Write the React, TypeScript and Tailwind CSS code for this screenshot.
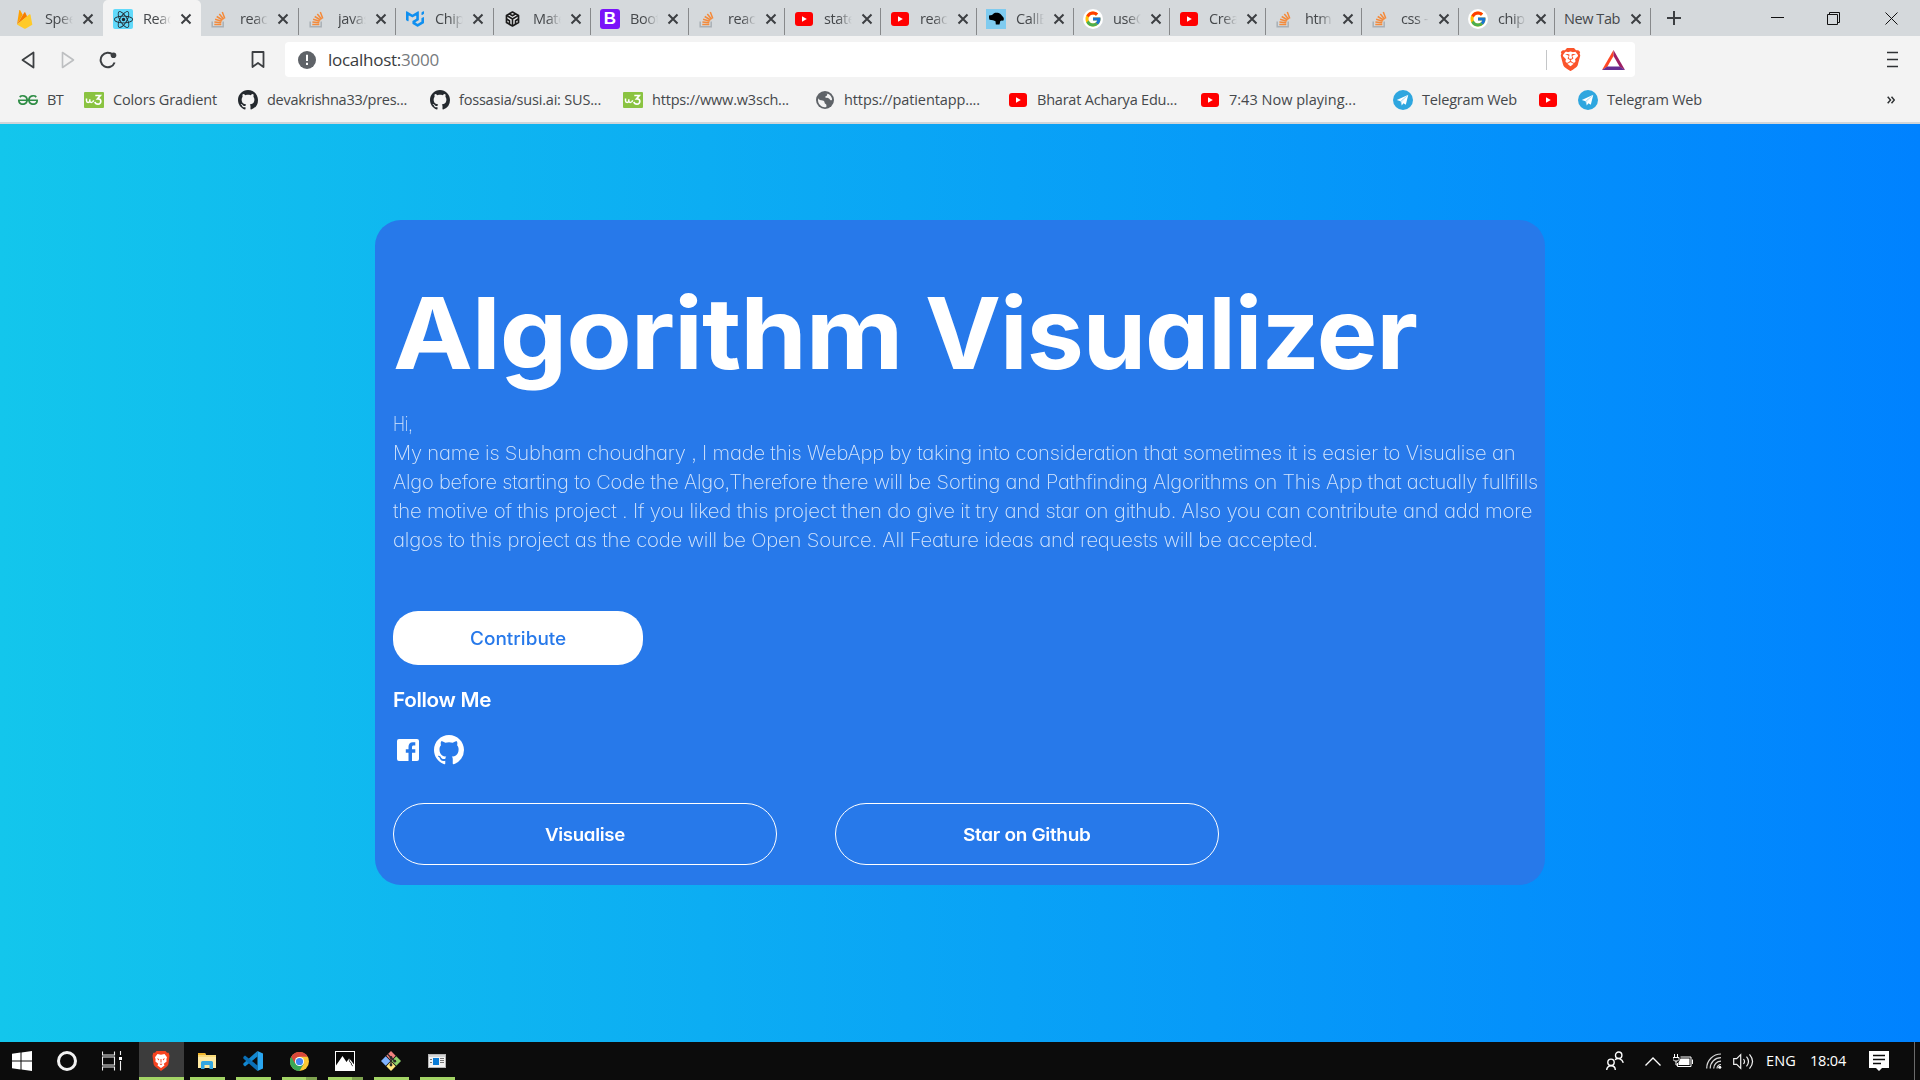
import React, { useLayoutEffect, useRef } from "react";
import type { ReactNode } from "react";
import { FaReact } from "react-icons/fa";
import { FcGoogle } from "react-icons/fc";
import { SiMui, SiBrave, SiGeeksforgeeks } from "react-icons/si";

/* Tracks a single line of text out (or in) until it spans the given width. */
function Line({ w, children, className = "" }: { w: number; children: string; className?: string }) {
  const ref = useRef<HTMLSpanElement>(null);
  useLayoutEffect(() => {
    const el = ref.current;
    if (!el) return;
    el.style.letterSpacing = "0px";
    const natural = el.getBoundingClientRect().width;
    el.style.letterSpacing = `${(w - natural) / children.length}px`;
  }, [w, children]);
  return (
    <span ref={ref} className={`inline-block whitespace-pre ${className}`}>
      {children}
    </span>
  );
}

/* Widens the letterforms themselves until the line spans the given width. */
function WideLine({ w, children, className = "" }: { w: number; children: string; className?: string }) {
  const ref = useRef<HTMLSpanElement>(null);
  useLayoutEffect(() => {
    const el = ref.current;
    if (!el) return;
    el.style.transform = `scaleX(${w / el.offsetWidth})`;
  }, [w, children]);
  return (
    <span style={{ width: w }} className={`block text-left whitespace-pre ${className}`}>
      <span ref={ref} className="inline-block origin-left">
        {children}
      </span>
    </span>
  );
}

/* ---------- favicons ---------- */

const Octocat = ({ size, className = "" }: { size: number; className?: string }) => (
  <svg viewBox="0 0 16 16" width={size} height={size} className={className} fill="currentColor">
    <path d="M8 0C3.580 0 0 3.580 0 8c0 3.540 2.290 6.530 5.470 7.590.4.070.55-.17.55-.38 0-.19-.01-.82-.01-1.490-2.010.37-2.530-.49-2.690-.94-.09-.23-.48-.94-.82-1.130-.28-.15-.68-.52-.01-.53.63-.01 1.080.58 1.230.82.72 1.210 1.870.87 2.330.66.070-.52.28-.87.51-1.070-1.780-.2-3.640-.89-3.640-3.950 0-.87.31-1.590.82-2.150-.08-.2-.36-1.020.08-2.120 0 0 .67-.21 2.200.82.64-.18 1.320-.27 2-.27s1.360.09 2 .27c1.530-1.040 2.200-.82 2.200-.82.44 1.100.16 1.920.08 2.120.51.56.82 1.270.82 2.150 0 3.070-1.870 3.750-3.650 3.950.29.25.54.73.54 1.480 0 1.070-.01 1.930-.01 2.200 0 .21.15.46.55.38A8.010 8.010 0 0 0 16 8c0-4.420-3.580-8-8-8z" />
  </svg>
);

const StackOverflow = () => (
  <svg viewBox="0 0 20 20" className="h-5 w-5" fill="none">
    <path d="M2.2 12.5v5.3h11v-5.3" stroke="#a9b0b6" strokeWidth="1.5" />
    <path
      d="M4.3 15.6h7M4.4 13l6.9.7M5.1 10.3l6.6 1.9M6.7 7.5l5.9 3.5M9.3 4.9l4.4 5.3M12.3 3l2.5 6.4"
      stroke="#f48a3a"
      strokeWidth="1.5"
    />
  </svg>
);

const Firebase = () => (
  <svg viewBox="0 0 20 20" className="h-5 w-5">
    <path d="M2 15.5 4.2 1.6c.1-.6.8-.7 1.1-.2l2.4 4.4L2 15.5z" fill="#ffa000" />
    <path d="M2 15.5 9.3 3.5c.2-.4.8-.4 1 0l1.8 4L2 15.5z" fill="#f57c00" />
    <path d="m2 15.5 12.5-10.2c.4-.3.9-.1 1 .4l1.800 10-6.500 3.700c-.6.3-1.200.3-1.800 0L2 15.500z" fill="#ffca28" />
  </svg>
);

const ReactIcon = () => (
  <span className="flex h-5 w-5 items-center justify-center rounded-[2px] bg-[#61dafb] text-[#20232a]">
    <FaReact size={19} />
  </span>
);

const Sandbox = () => (
  <svg viewBox="0 0 20 20" className="h-5 w-5" fill="none" stroke="#1b1b1b" strokeLinejoin="round">
    <path d="m9.500 3 6 3.400v7.200l-6 3.400-6-3.400V6.400l6-3.400z" strokeWidth="1.700" fill="#e9eaeb" />
    <path d="M3.500 6.400 9.500 10l6-3.600M9.500 10v7M6.300 4.900l3.200 1.800 3.200-1.800M3.500 10l3 1.800v3.500M15.500 10l-3 1.800v3.500" strokeWidth="1.600" />
  </svg>
);

const Bootstrap = () => (
  <span className="flex h-5 w-5 items-center justify-center rounded-[3px] bg-[#7a12f9] font-['Liberation_Sans',sans-serif] text-[17px] leading-5 font-bold text-white">
    B
  </span>
);

const YouTube = () => (
  <span className="flex h-5 w-5 items-center justify-center">
    <svg viewBox="0 0 18 14" className="h-3.5 w-[18px]">
      <rect width="18" height="14" rx="3" fill="#f00" />
      <path d="M7 4.200v5.600L11.800 7z" fill="#fff" />
    </svg>
  </span>
);

const Google = () => (
  <span className="flex h-5 w-5 items-center justify-center rounded-full bg-white">
    <FcGoogle size={18} />
  </span>
);

const Dog = () => (
  <svg viewBox="0 0 20 20" className="h-5 w-5">
    <rect width="20" height="20" fill="#7fcbef" />
    <path d="M3 6.500 6 6l2-1.800c2-.7 5-.5 6.500.8l3 3.500c.6 1.200.4 2.500-.3 3.200l-1.400-.3-1.500.5-.8 3.600H9.800l-.3-3.300-2.500-1-3.500-.5L3 9z" fill="#000" />
  </svg>
);

const W3 = () => (
  <svg viewBox="0 0 20 16" className="h-4 w-5" fill="none" stroke="#fff">
    <rect width="20" height="16" rx="1" fill="#8ac341" stroke="none" />
    <path d="M2.500 6.500v2.200c0 2.300 3.300 2.300 3.300 0V7.200v1.500c0 2.300 3.600 2.300 3.800-.4" strokeWidth="1.500" />
    <path d="M11.300 3.500h5l-2.700 3.300c4.200-.4 4.200 5.300.4 5.300-1.700 0-2.800-.8-3.100-2.300" strokeWidth="1.700" />
  </svg>
);

const Globe = () => (
  <svg viewBox="0 0 20 20" className="h-5 w-5">
    <circle cx="10" cy="10" r="9" fill="#5f6368" />
    <path
      d="M3.200 8.200c1.800 2.800 3.600 1.700 5.300 2.500 1.600.8.600 2.400 1.800 3 1 .5 1.400 1.400 1 3.300-2.800.6-4.300-.2-5.800-1.500C3.300 13.700 2.600 11 3.200 8.200zM8.400 3.300c1.500-.4 3.400-.3 4.800.5-1.300.4-1.500 1.200-1.400 2.200-1.300-.1-1.600.6-1.500 1.600 1.200.7 2.500.2 3.600.8 1.100.7 1.300 2.100 2.700 1.900.4-.3.500-.8.500-1.300-.6-2.500-2.100-4.500-4.300-5.300-1.600-.7-3.200-.8-4.400-.4z"
      fill="#f3f3f3"
    />
  </svg>
);

const Telegram = () => (
  <svg viewBox="0 0 20 20" className="h-5 w-5">
    <circle cx="10" cy="10" r="10" fill="#2ea6df" />
    <path d="M15.300 4.800 3.800 10l3.700 1.300L15.300 4.800zM15.300 4.800 8.700 11.800v3.800l1.800-2.300 2.300 1.500z" fill="#fff" />
    <path d="M7.500 11.300 15.300 4.800 8.700 12v3.600z" fill="#e0f1fa" />
  </svg>
);

const GitHub = () => <Octocat size={20} className="text-[#24292e]" />;
const Mui = () => <SiMui size={18} className="text-[#0f8ff0]" />;
const Geeks = () => <SiGeeksforgeeks size={20} className="text-[#2f8d46]" />;

/* ---------- tab strip ---------- */

const Close = () => (
  <svg viewBox="0 0 12 12" className="h-3 w-3 shrink-0" stroke="#3c3f42" strokeWidth="2">
    <path d="m1.500 1.500 9 9m0-9-9 9" />
  </svg>
);

type TabData = { icon?: ReactNode; text: string; w: number; active?: boolean; bar?: boolean };

const tabs: TabData[] = [
  { icon: <Firebase />, text: "Spee", w: 98 },
  { icon: <ReactIcon />, text: "Reac", w: 98, active: true },
  { icon: <StackOverflow />, text: "reac", w: 98, bar: true },
  { icon: <StackOverflow />, text: "javas", w: 97, bar: true },
  { icon: <Mui />, text: "Chip", w: 98, bar: true },
  { icon: <Sandbox />, text: "Mate", w: 97, bar: true },
  { icon: <Bootstrap />, text: "Boot", w: 98, bar: true },
  { icon: <StackOverflow />, text: "reac", w: 96, bar: true },
  { icon: <YouTube />, text: "state", w: 96, bar: true },
  { icon: <YouTube />, text: "reac", w: 96, bar: true },
  { icon: <Dog />, text: "CallB", w: 97, bar: true },
  { icon: <Google />, text: "useC", w: 96, bar: true },
  { icon: <YouTube />, text: "Crea", w: 96, bar: true },
  { icon: <StackOverflow />, text: "htm", w: 96, bar: true },
  { icon: <StackOverflow />, text: "css -", w: 97, bar: true },
  { icon: <Google />, text: "chip", w: 96, bar: true },
  { text: "New Tab", w: 96, bar: true },
];

function Tab({ icon, text, w, active, bar }: TabData) {
  return (
    <div
      style={{ width: w }}
      className={`flex h-9 shrink-0 items-center pt-0.5 ${bar ? "pl-[9px]" : "pl-2.5"} ${active ? "rounded-t-[5px] bg-[#f3f3f3]" : ""}`}
    >
      {icon && <span className="mr-2.5 flex h-5 w-5 shrink-0 items-center justify-center">{icon}</span>}
      {icon ? (
        <span className="h-6 w-[28px] shrink-0 mask-r-from-50% text-[14.5px] leading-6 tracking-[-0.4px] whitespace-pre text-[#45484b]">
          {text}
        </span>
      ) : (
        <Line w={56} className="shrink-0 text-[14.5px] leading-6 text-[#45484b]">
          {text}
        </Line>
      )}
      <span className={icon ? "ml-[9px]" : "ml-2.5"}>
        <Close />
      </span>
      {bar && <span className="mt-[5px] ml-auto h-[27px] w-px shrink-0 bg-[#87898b]" />}
    </div>
  );
}

function TabStrip() {
  return (
    <div className="flex h-9 bg-[#d5d9dc] pl-[5px]">
      {tabs.map((t, i) => (
        <Tab key={i} {...t} />
      ))}
      <svg viewBox="0 0 14 14" className="mt-[11px] ml-4 h-3.5 w-3.5" stroke="#3c3f42" strokeWidth="2">
        <path d="M7 0v14M0 7h14" />
      </svg>
      <div className="mr-[22px] ml-auto flex items-center">
        <svg viewBox="0 0 13 13" className="h-[13px] w-[13px]" stroke="#111" fill="none">
          <path d="M0 5.500h13" />
        </svg>
        <svg viewBox="0 0 13 13" className="ml-[43px] h-[13px] w-[13px]" stroke="#111" fill="none">
          <path d="M.5 2.500h10v10H.5zM2.500 2.500v-2h10v10h-2" />
        </svg>
        <svg viewBox="0 0 13 13" className="ml-[45px] h-[13px] w-[13px]" stroke="#111" fill="none">
          <path d="m.5.500 12 12m0-12-12 12" />
        </svg>
      </div>
    </div>
  );
}

/* ---------- toolbar ---------- */

function Toolbar() {
  return (
    <div className="flex h-12 items-center pb-px pl-[21px]">
      <svg viewBox="0 0 14 18" className="h-[18px] w-3.5" fill="none" stroke="#3c3f42" strokeWidth="1.800" strokeLinejoin="round">
        <path d="M12.500 1.500v15L1.500 9z" />
      </svg>
      <svg viewBox="0 0 14 18" className="ml-[26px] h-[18px] w-3.5" fill="none" stroke="#bdbfc1" strokeWidth="1.600" strokeLinejoin="round">
        <path d="M1.500 1.500v15L12.500 9z" />
      </svg>
      <svg viewBox="0 0 18 18" className="ml-6 h-[18px] w-[18px]" fill="none" stroke="#3c3f42" strokeWidth="2">
        <path d="M15.600 11.500A7.200 7.200 0 1 1 14 4" />
        <circle cx="14.500" cy="4.300" r="2.800" fill="#3c3f42" stroke="none" />
      </svg>
      <svg viewBox="0 0 14 17" className="ml-[134px] h-[17px] w-3.5" fill="none" stroke="#3c3f42" strokeWidth="1.800" strokeLinejoin="round">
        <path d="M1.500 1h11v15L7 12l-5.500 4z" />
      </svg>
      <div className="ml-5 flex h-[35px] w-[1350px] items-center rounded-[4px] bg-white pl-[13px]">
        <svg viewBox="0 0 18 18" className="h-[18px] w-[18px]">
          <circle cx="9" cy="9" r="9" fill="#5f6368" />
          <path d="M9 3.700v6.200M9 11.800v2.200" stroke="#fff" strokeWidth="2" />
        </svg>
        <span className="ml-3 flex text-[17px] leading-6">
          <Line w={73} className="text-[#393c3e]">localhost:</Line>
          <Line w={38} className="text-[#777a7d]">3000</Line>
        </span>
        <span className="ml-auto h-5 w-px bg-[#c4c6c8]" />
        <SiBrave size={23} className="mx-[12px] text-[#fb542b]" />
        <svg viewBox="0 0 23 20" className="mr-2.5 ml-2 h-5 w-[23px]">
          <path d="M11.500 0 0 20l5.300-3.300L11.500 6z" fill="#ff4724" />
          <path d="M11.500 0 23 20l-5.300-3.300L11.500 6z" fill="#9e1f63" />
          <path d="M0 20h23l-5.300-3.600H5.300z" fill="#662d91" />
        </svg>
      </div>
      <svg viewBox="0 0 11 17" className="mr-[22px] ml-auto h-[17px] w-[11px]" stroke="#2f3234" strokeWidth="1.500">
        <path d="M0 1.500h11M0 8.500h11M0 15.500h11" />
      </svg>
    </div>
  );
}

type Mark = { icon: ReactNode; text?: string; tw?: number; w: number };

const bookmarks: Mark[] = [
  { icon: <Geeks />, text: "BT", tw: 16, w: 66 },
  { icon: <W3 />, text: "Colors Gradient", tw: 104, w: 154 },
  { icon: <GitHub />, text: "devakrishna33/pres...", tw: 140, w: 192 },
  { icon: <GitHub />, text: "fossasia/susi.ai: SUS...", tw: 142, w: 193 },
  { icon: <W3 />, text: "https://www.w3sch...", tw: 137, w: 192 },
  { icon: <Globe />, text: "https://patientapp....", tw: 136, w: 193 },
  { icon: <YouTube />, text: "Bharat Acharya Edu...", tw: 140, w: 192 },
  { icon: <YouTube />, text: "7:43 Now playing...", tw: 127, w: 193 },
  { icon: <Telegram />, text: "Telegram Web", tw: 95, w: 145 },
  { icon: <YouTube />, w: 40 },
  { icon: <Telegram />, text: "Telegram Web", tw: 95, w: 145 },
];

function Bookmarks() {
  return (
    <div className="flex h-[38px] items-center pb-[6px] pl-[18px] text-[14.5px] leading-6 text-[#45484b]">
      {bookmarks.map((b, i) => (
        <div key={i} style={{ width: b.w }} className="flex shrink-0 items-center">
          <span className="mr-[9px] flex h-5 w-5 shrink-0 items-center justify-center">{b.icon}</span>
          {b.text && <Line w={b.tw ?? 0}>{b.text}</Line>}
        </div>
      ))}
      <svg viewBox="0 0 8 8" className="mr-[25px] ml-auto h-2 w-2" fill="none" stroke="#2f3234" strokeWidth="1.500">
        <path d="m.7.700 2.800 3.300L.7 7.300M4.500.7 7.300 4 4.500 7.300" />
      </svg>
    </div>
  );
}

/* ---------- page ---------- */

const paragraph: [string, number][] = [
  ["Hi,", 20],
  ["My name is Subham choudhary , I made this WebApp by taking into consideration that sometimes it is easier to Visualise an", 1122],
  ["Algo before starting to Code the Algo,Therefore there will be Sorting and Pathfinding Algorithms on This App that actually fullfills", 1145],
  ["the motive of this project . If you liked this project then do give it try and star on github. Also you can contribute and add more", 1139],
  ["algos to this project as the code will be Open Source. All Feature ideas and requests will be accepted.", 925],
];

function Card() {
  return (
    <section className="flex h-[665px] w-[1170px] flex-col items-start rounded-[26px] bg-[#2779ea] pl-[18px] font-['Inter',sans-serif] text-white [font-feature-settings:'cv11','ss03']">
      <h1 className="mt-[53px] flex h-[120px] gap-[23px] text-[99px] leading-[120px] font-[650] tracking-[-1px]">
        <WideLine w={509}>Algorithm</WideLine>
        <WideLine w={492}>Visualizer</WideLine>
      </h1>
      <div className="mt-[17px] flex flex-col items-start text-[19.5px] leading-[29px] font-extralight tracking-[-0.2px] text-[#d6e6fc]">
        {paragraph.map(([t, w]) => (
          <WideLine key={t} w={w}>
            {t}
          </WideLine>
        ))}
      </div>
      <button className="mt-14 flex h-[54px] w-[250px] items-center justify-center rounded-[25px] bg-white text-[18px] font-medium text-[#2779ea]">
        <WideLine w={96}>Contribute</WideLine>
      </button>
      <h2 className="mt-5 h-[30px] text-[20px] leading-[30px] font-semibold tracking-[-0.3px]">
        <WideLine w={98}>Follow Me</WideLine>
      </h2>
      <div className="mt-5 flex h-[30px] items-center">
        <svg viewBox="0 0 22 22" className="ml-1 h-[22px] w-[22px]">
          <path
            d="M2 0h18a2 2 0 0 1 2 2v18a2 2 0 0 1-2 2h-5v-8.300h3.300V10.300H15V8.200c0-1 .5-1.600 1.600-1.600h1.700V3.200h-2.400c-3 0-4.400 1.800-4.400 4.500v2.600H8.800v3.400h2.700V22H2a2 2 0 0 1-2-2V2a2 2 0 0 1 2-2z"
            fill="#fff"
          />
        </svg>
        <Octocat size={30} className="ml-[15px]" />
      </div>
      <div className="mt-[38px] flex gap-[58px] text-[17.5px] font-semibold tracking-[-0.3px]">
        <button className="flex h-[62px] w-96 items-center justify-center rounded-[31px] border border-white pt-0.5">
          <WideLine w={80}>Visualise</WideLine>
        </button>
        <button className="flex h-[62px] w-96 items-center justify-center rounded-[31px] border border-white pt-0.5">
          <WideLine w={128}>Star on Github</WideLine>
        </button>
      </div>
    </section>
  );
}

/* ---------- taskbar ---------- */

const BraveLion = () => (
  <svg viewBox="0 0 18 20" className="h-5 w-[18px]">
    <path d="M4.500 0h9L15 1.700h1.700l.8 3-1 7.800c-.3 1.800-1 2.500-2.200 3.400L9 20l-5.300-4.100c-1.200-.9-1.900-1.600-2.200-3.400L.5 4.700l.8-3H3z" fill="#f5431f" />
    <path d="m5.500 3 3.500.8 3.500-.8 2.500 3.300-.6 2 .2 2.200-2.800 2.200.7 1.700L9 17l-3.500-2.600.7-1.700-2.800-2.200.2-2.200-.6-2z" fill="#fff" />
    <path d="m4.800 7.300 2.400.6-.4 1.500zM13.200 7.300l-2.400.6.4 1.500zM7.500 12.800h3L9 14.200zM8.500 8h1v3.500h-1z" fill="#f5431f" />
  </svg>
);

const Folder = () => (
  <svg viewBox="0 0 18 16" className="h-4 w-[18px]">
    <path d="M0 0h7l1 2h10v13H0z" fill="#f9d978" />
    <path d="M0 0h7l1 2H0z" fill="#f0b429" />
    <path d="M0 4h18v11H0z" fill="#ffe9a2" />
    <path d="M3 16V9.500A1.500 1.500 0 0 1 4.500 8h9A1.500 1.500 0 0 1 15 9.500V16h-3.500v-4h-5v4z" fill="#35a7e0" />
  </svg>
);

const Code = () => (
  <svg viewBox="0 0 20 20" className="h-5 w-5">
    <path d="M14.500 0v5.500L2 15.500.3 14v-1.500z" fill="#1287d0" />
    <path d="M14.500 20v-5.500L2 4.500.3 6v1.500z" fill="#0a70b8" />
    <path d="M14.500 0 20 2.500v15L14.500 20z" fill="#2aa6f0" />
  </svg>
);

const ChromeLogo = () => (
  <svg viewBox="0 0 20 20" className="h-[19px] w-[19px]">
    <circle cx="10" cy="10" r="10" fill="#fcc934" />
    <path d="M10 10 1.300 5A10 10 0 0 0 10 20l4.300-7.500z" fill="#3aa757" />
    <path d="M1.300 5a10 10 0 0 1 17.400 0H10a5 5 0 0 0-4.300 2.500L5.600 12.500z" fill="#d9483b" />
    <circle cx="10" cy="10" r="4.800" fill="#fff" />
    <circle cx="10" cy="10" r="3.800" fill="#4285f4" />
  </svg>
);

const Photo = () => (
  <svg viewBox="0 0 20 20" className="h-5 w-5">
    <rect x=".5" y=".5" width="19" height="19" fill="#060606" stroke="#fff" />
    <path d="M1 14.500 7.500 5l4 6 2.500-3.500 2 2 3 4V20H1z" fill="#fff" />
    <path d="m14 8 .8 3 1.500 1 .2 2 1.500 1" stroke="#222" strokeWidth=".8" fill="none" />
  </svg>
);

const Git = () => (
  <svg viewBox="0 0 20 20" className="h-5 w-5">
    <path d="m10 0 4.700 4.700L10 9.400 5.300 4.700z" fill="#f0827e" />
    <path d="m15.300 5.300 4.700 4.700-4.700 4.700-4.700-4.700z" fill="#8fd16a" />
    <path d="M4.700 5.300 9.400 10l-4.700 4.700L0 10z" fill="#80b3ff" />
    <path d="m10 10.600 4.700 4.700L10 20l-4.700-4.700z" fill="#ffe680" />
    <path d="m6.500 3 7 7M10 6v8" stroke="#2a2a2a" strokeWidth="1.300" />
    <circle cx="10" cy="6.500" r="1.400" fill="#2a2a2a" />
    <circle cx="13.800" cy="10.200" r="1.400" fill="#2a2a2a" />
    <circle cx="10" cy="14" r="1.400" fill="#2a2a2a" />
  </svg>
);

const AppWindow = () => (
  <svg viewBox="0 0 18 14" className="h-3.5 w-[18px]">
    <rect x=".5" y=".5" width="17" height="13" fill="#f3f3f3" stroke="#b5b5b5" />
    <path d="M0 2h18" stroke="#b5b5b5" />
    <rect x="5" y="4" width="6" height="7" fill="#0a7bd6" />
    <path d="M2 5.500h2M2 8.500h2M12 4.500h4M12 6.500h4M12 8.500h4" stroke="#777" />
  </svg>
);

const apps: { icon: ReactNode; split?: boolean }[] = [
  { icon: <Folder /> },
  { icon: <Code /> },
  { icon: <ChromeLogo />, split: true },
  { icon: <Photo />, split: true },
  { icon: <Git /> },
  { icon: <AppWindow /> },
];

function Taskbar() {
  return (
    <footer className="flex h-[38px] bg-[#0c0c0c] text-white">
      <div className="flex w-[139px] items-center pl-3">
        <svg viewBox="0 0 20 20" className="h-5 w-5" fill="#fff">
          <path d="M0 2.800 8.500 1.600v7.900H0zM9.500 1.400 20 0v9.500H9.500zM0 10.500h8.500v7.900L0 17.200zM9.500 10.500H20V20L9.500 18.600z" />
        </svg>
        <span className="ml-[25px] h-5 w-5 rounded-full border-[3px] border-[#f2f2f2]" />
        <svg viewBox="0 0 20 20" className="ml-[25px] h-5 w-5" fill="none" stroke="#eee" strokeWidth="1.100">
          <path d="M.5.500V4h12V.5M.5 19.500V16h12v3.500M.5 6h12v8H.5zM18.500 0v4M18.500 10v9.500" />
          <path d="M17 6h3v3h-3z" fill="#fff" stroke="none" />
        </svg>
      </div>
      <div className="flex h-full w-[45px] flex-col bg-[#3c3c3c]">
        <div className="flex flex-1 items-center justify-center pt-[3px] pr-px">
          <BraveLion />
        </div>
        <div className="h-[3px] bg-[#a3d465]" />
      </div>
      <div className="ml-px flex">
        {apps.map((a, i) => (
          <div key={i} className="flex w-[46px] flex-col px-[5px]">
            <div className="flex w-[35px] flex-1 items-center justify-center pt-[3px] pr-px">{a.icon}</div>
            <div className="flex h-[3px] w-[35px] bg-[#a3d465]">
              {a.split && <span className="ml-auto h-full w-[11px] bg-[#7ea34f]" />}
            </div>
          </div>
        ))}
      </div>
      <div className="ml-auto flex items-center">
        <svg viewBox="0 0 18 20" className="h-5 w-[18px]" fill="none" stroke="#fff" strokeWidth="1.400">
          <circle cx="12.700" cy="4.200" r="3.200" />
          <circle cx="5" cy="11.300" r="3.200" />
          <path d="M.7 19c0-2.500 1.800-4.300 4.300-4.300S9.300 16.500 9.300 19M9 8.800c2.700-2.300 7-1.300 8.300 3" />
        </svg>
        <svg viewBox="0 0 16 9" className="ml-[21px] h-[9px] w-4" fill="none" stroke="#fff" strokeWidth="1.300">
          <path d="m.5 8.500 7.500-7.500 7.500 7.500" />
        </svg>
        <svg viewBox="0 0 20 14" className="ml-3 h-3.5 w-5" fill="none" stroke="#fff">
          <path d="M1.500 0v3M4.500 0v3M0 3.500h6v2L4.500 7h-3L0 5.500zM3 7v4h2" />
          <path d="M7.500 3h10.500v9.500H4.500V9" />
          <path d="M7.500 4.500h9V11h-11V8.500z" fill="#fff" stroke="none" />
          <path d="M19.500 5.500V10" />
        </svg>
        <svg viewBox="0 0 16 16" className="ml-[13px] h-4 w-4" fill="none" stroke="#d8d8d8" strokeWidth="1.200">
          <path d="M.7 15.500C.7 7.500 7 1 15 1M4.200 15.500C4.200 9.300 9 4.700 15 4.700M7.700 15.500c0-4.200 3.300-7.300 7.300-7.300M11 15.500c0-2.200 1.800-4 4-4" />
          <circle cx="13.800" cy="14.200" r="1.500" fill="#fff" stroke="none" />
        </svg>
        <svg viewBox="0 0 21 17" className="ml-[11px] h-[17px] w-[21px]" fill="none" stroke="#f0f0f0" strokeWidth="1.200">
          <path d="M.7 5.700h3l4-4v13.600l-4-4h-3zM10.500 6c1.200 1.500 1.200 3.500 0 5M13.500 3.700c2.500 3 2.500 6.600 0 9.600M16.500 1.300c3.800 4.500 3.800 9.900 0 14.400" />
        </svg>
        <Line w={30} className="ml-3 text-[14.5px]">ENG</Line>
        <Line w={36} className="ml-[14px] text-[14.5px]">18:04</Line>
        <svg viewBox="0 0 20 20" className="ml-[23px] h-5 w-5">
          <path d="M0 0h20v17h-7l-3 3-3-3H0z" fill="#fff" />
          <path d="M4 4.500h12M4 8.500h12M4 12.500h8" stroke="#0c0c0c" strokeWidth="1.300" />
        </svg>
        <span className="mr-[5px] ml-[25px] h-[38px] w-px bg-[#6b6b6b]" />
      </div>
    </footer>
  );
}

export default function App() {
  return (
    <div className="flex h-[1080px] w-[1920px] flex-col overflow-hidden bg-[#f3f3f3] font-['Open_Sans','Noto_Sans',sans-serif]">
      <TabStrip />
      <Toolbar />
      <Bookmarks />
      <div className="h-0.5 bg-[#d0d5d9]" />
      <main className="flex flex-1 justify-center bg-linear-to-r/srgb from-[#13c6ec] to-[#0082ff] pt-24">
        <Card />
      </main>
      <Taskbar />
    </div>
  );
}
